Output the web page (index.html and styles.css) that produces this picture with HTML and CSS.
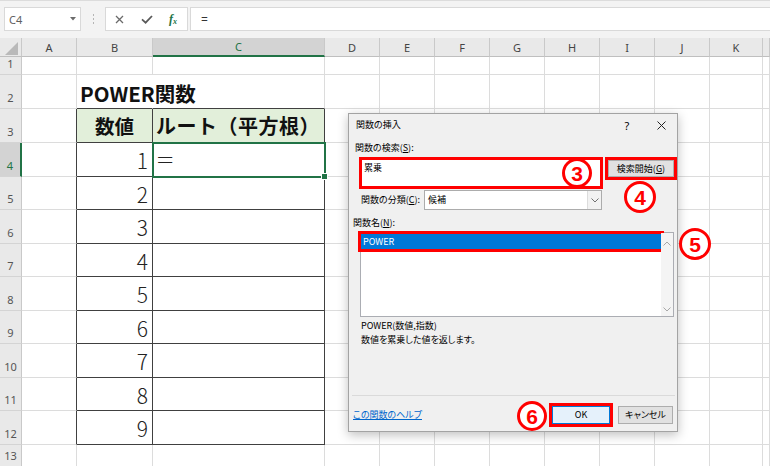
FILE: index.html
```html
<!DOCTYPE html>
<html lang="ja">
<head>
<meta charset="utf-8">
<title>POWER関数</title>
<link rel="stylesheet" href="styles.css">
</head>
<body>
<div class="app">
  <div class="fbar">
    <div class="namebox"><span>C4</span><svg width="6" height="4" viewBox="0 0 6 4"><path d="M0 0h6L3 3.5z" fill="#6b6b6b"/></svg></div>
    <div class="grip"><i></i><i></i><i></i></div>
    <div class="fbtns">
      <svg class="ic-x" width="9" height="9" viewBox="0 0 9 9"><path d="M1 1l7 7M8 1L1 8" stroke="#6a6a6a" stroke-width="1.3"/></svg>
      <svg class="ic-ok" width="12" height="9" viewBox="0 0 12 9"><path d="M1 4.3l3.6 3.4L11 1" fill="none" stroke="#5a5a5a" stroke-width="1.8"/></svg>
      <span class="fx">f<sub>x</sub></span>
    </div>
    <div class="finput">=</div>
  </div>

  <div class="sheet">
    <div class="r hd"><div class="corner"><svg width="13" height="13" viewBox="0 0 13 13"><path d="M13 0V13H0z" fill="#b9b9b9"/></svg></div><div>A</div><div>B</div><div class="on">C</div><div>D</div><div>E</div><div>F</div><div>G</div><div>H</div><div>I</div><div>J</div><div>K</div><div></div></div>
    <div class="r h1"><div class="rh">1</div><div></div><div></div><div></div><div></div><div></div><div></div><div></div><div></div><div></div><div></div><div></div><div></div></div>
    <div class="r h2"><div class="rh">2</div><div></div><div class="pw tb nr">POWER関数</div><div class="tb"></div><div></div><div></div><div></div><div></div><div></div><div></div><div></div><div></div><div></div></div>
    <div class="r h3"><div class="rh">3</div><div class="tl"></div><div class="t th">数値</div><div class="t th c3">ルート（平方根）</div><div></div><div></div><div></div><div></div><div></div><div></div><div></div><div></div><div></div></div>
    <div class="r hn"><div class="rh on">4</div><div class="tl"></div><div class="t num">1</div><div class="t sel"><span class="eq">=</span></div><div></div><div></div><div></div><div></div><div></div><div></div><div></div><div></div><div></div></div>
    <div class="r hn"><div class="rh">5</div><div class="tl"></div><div class="t num">2</div><div class="t"></div><div></div><div></div><div></div><div></div><div></div><div></div><div></div><div></div><div></div></div>
    <div class="r hn"><div class="rh">6</div><div class="tl"></div><div class="t num">3</div><div class="t"></div><div></div><div></div><div></div><div></div><div></div><div></div><div></div><div></div><div></div></div>
    <div class="r hn"><div class="rh">7</div><div class="tl"></div><div class="t num">4</div><div class="t"></div><div></div><div></div><div></div><div></div><div></div><div></div><div></div><div></div><div></div></div>
    <div class="r hn"><div class="rh">8</div><div class="tl"></div><div class="t num">5</div><div class="t"></div><div></div><div></div><div></div><div></div><div></div><div></div><div></div><div></div><div></div></div>
    <div class="r hn"><div class="rh">9</div><div class="tl"></div><div class="t num">6</div><div class="t"></div><div></div><div></div><div></div><div></div><div></div><div></div><div></div><div></div><div></div></div>
    <div class="r hn"><div class="rh">10</div><div class="tl"></div><div class="t num">7</div><div class="t"></div><div></div><div></div><div></div><div></div><div></div><div></div><div></div><div></div><div></div></div>
    <div class="r hn"><div class="rh">11</div><div class="tl"></div><div class="t num">8</div><div class="t"></div><div></div><div></div><div></div><div></div><div></div><div></div><div></div><div></div><div></div></div>
    <div class="r hn"><div class="rh">12</div><div class="tl"></div><div class="t num">9</div><div class="t"></div><div></div><div></div><div></div><div></div><div></div><div></div><div></div><div></div><div></div></div>
    <div class="r h13"><div class="rh">13</div><div></div><div></div><div></div><div></div><div></div><div></div><div></div><div></div><div></div><div></div><div></div><div></div></div>
  </div>

  <div class="dlg">
    <div class="dtitle"><span class="tt">関数の挿入</span><span class="q">?</span><span class="xb"><svg width="9" height="9" viewBox="0 0 9 9"><path d="M.5 .5l8 8M8.5 .5l-8 8" stroke="#222" stroke-width="1"/></svg></span></div>
    <div class="lbl l1">関数の検索(<u>S</u>):</div>
    <div class="srow">
      <div class="search">累乗</div>
      <div class="sbtn">検索開始(<u>G</u>)</div>
    </div>
    <div class="crow">
      <span class="clbl">関数の分類(<u>C</u>):</span>
      <div class="select"><span>候補</span><div class="arr"><svg width="8" height="5" viewBox="0 0 8 5"><path d="M.5 .5L4 4 7.5 .5" fill="none" stroke="#707070" stroke-width="1"/></svg></div></div>
    </div>
    <div class="lbl l2">関数名(<u>N</u>):</div>
    <div class="list">
      <div class="items"><div class="item">POWER</div></div>
      <div class="vscroll">
        <svg width="8" height="5" viewBox="0 0 8 5"><path d="M.5 4.5L4 1l3.5 3.5" fill="none" stroke="#a8a8a8" stroke-width="1"/></svg>
        <svg width="8" height="5" viewBox="0 0 8 5"><path d="M.5 .5L4 4 7.5 .5" fill="none" stroke="#a8a8a8" stroke-width="1"/></svg>
      </div>
    </div>
    <div class="desc">
      <div>POWER(数値,指数)</div>
      <div>数値を累乗した値を返します。</div>
    </div>
    <div class="sep"></div>
    <div class="foot">
      <a class="help">この関数のヘルプ</a>
      <div class="okwrap"><div class="ok">OK</div></div>
      <div class="cancel">キャンセル</div>
    </div>
    <div class="mark m3">3</div>
    <div class="mark m4">4</div>
    <div class="mark m5">5</div>
    <div class="mark m6">6</div>
  </div>
</div>
</body>
</html>
```

FILE: styles.css
```css
html, body {
  margin: 0;
  padding: 0;
}
body {
  width: 770px;
  height: 466px;
  overflow: hidden;
  background: #fff;
  font-family: "Noto Sans CJK JP", "Noto Sans", sans-serif;
}
.app {
  position: relative;
  width: 770px;
  height: 466px;
}

/* ---------- formula bar ---------- */
.fbar {
  height: 38px;
  box-sizing: border-box;
  background: #f3f3f3;
  border-top: 1px solid #dcdcdc;
  padding: 6px 0 7px 4px;
  display: flex;
}
.namebox {
  width: 77px;
  box-sizing: border-box;
  background: #fff;
  border: 1px solid #d9d9d9;
  display: flex;
  align-items: center;
  justify-content: space-between;
  padding: 0 4px 0 4px;
  font: 11px "Noto Sans", sans-serif;
  color: #606060;
}
.grip {
  width: 24px;
  display: flex;
  flex-direction: column;
  align-items: center;
  justify-content: center;
  gap: 2px;
}
.grip i {
  display: block;
  width: 1px;
  height: 2px;
  background: #b5b5b5;
}
.fbtns {
  width: 83px;
  box-sizing: border-box;
  background: #fff;
  border: 1px solid #d9d9d9;
  display: flex;
  align-items: center;
  padding-left: 9px;
}
.ic-ok {
  margin-left: 17px;
}
.fx {
  margin-left: 16px;
  font: italic bold 12px "Liberation Serif", serif;
  color: #217346;
}
.fx sub {
  font-size: 8px;
  vertical-align: -1px;
}
.finput {
  flex: 1;
  margin-left: 2px;
  background: #fff;
  border: 1px solid #d9d9d9;
  border-right: none;
  padding-left: 10px;
  display: flex;
  align-items: center;
  font: 12px "Noto Sans", sans-serif;
  color: #333;
}

/* ---------- sheet grid ---------- */
.r {
  display: grid;
  grid-template-columns: 22px 55px 76px 172px repeat(7, 55px) 53px 1fr;
}
.r > div {
  box-sizing: border-box;
  border-right: 1px solid #dcdcdc;
  border-bottom: 1px solid #dcdcdc;
  min-width: 0;
}
.hd { height: 19px; }
.h1 { height: 18px; }
.h2 { height: 34px; }
.h3 { height: 34px; }
.hn { height: 33.5px; }
.h13 { height: 22px; }

.hd > div {
  background: #e9e9e9;
  border-right-color: #c9c9c9;
  border-bottom-color: #bfbfbf;
  display: flex;
  align-items: center;
  justify-content: center;
  font: 11px "Noto Sans", sans-serif;
  color: #444;
}
.hd > div.on {
  background: #d3d3d3;
  color: #217346;
  border-bottom: 2px solid #217346;
}
.hd > div.corner {
  align-items: flex-end;
  justify-content: flex-end;
  padding: 0 3px 1px 0;
}
.r > .rh {
  background: #e9e9e9;
  border-right-color: #c9c9c9;
  border-bottom-color: #d4d4d4;
  display: flex;
  align-items: flex-end;
  justify-content: center;
  padding-bottom: 4px;
  font: 11px/13px "Noto Sans", sans-serif;
  color: #555;
}
.r > .rh.on {
  background: #d3d3d3;
  color: #217346;
  border-right: 2px solid #217346;
}

.r > .tl { border-right-color: #404040; }
.r > .tb { border-bottom-color: #404040; }
.r > .nr { border-right-color: transparent; }
.r > .t {
  border-right-color: #404040;
  border-bottom-color: #404040;
}
.pw {
  display: flex;
  align-items: center;
  padding: 2px 0 0 3px;
  white-space: nowrap;
  font-size: 20.5px;
  font-weight: 700;
  color: #111;
}
.r > .th {
  background: #e2efda;
  display: flex;
  align-items: center;
  justify-content: center;
  font-size: 19.5px;
  font-weight: 700;
  color: #111;
  white-space: nowrap;
}
.r > .th.c3 {
  justify-content: flex-start;
  padding-left: 3px;
  font-size: 20px;
  letter-spacing: 0.5px;
}
.num {
  display: flex;
  align-items: center;
  justify-content: flex-end;
  padding: 2px 4px 0 0;
  font-size: 21px;
  font-weight: 300;
  color: #222;
}
.sel {
  position: relative;
  outline: 2px solid #217346;
  outline-offset: -1px;
  display: flex;
  align-items: center;
  padding-left: 4px;
  font-size: 21px;
  font-weight: 300;
  color: #222;
}
.eq {
  display: inline-block;
  transform: scaleX(1.45);
  transform-origin: left center;
}
.sel::after {
  content: "";
  position: absolute;
  right: -4px;
  bottom: -4px;
  width: 5px;
  height: 5px;
  background: #217346;
  border: 1px solid #fff;
}

/* ---------- dialog ---------- */
.dlg {
  position: absolute;
  left: 348px;
  top: 113px;
  width: 330px;
  height: 319px;
  box-sizing: border-box;
  background: #f0f0f0;
  border: 1px solid #a3a3a3;
  box-shadow: 0 3px 10px rgba(0, 0, 0, 0.25);
  font-size: 9px;
  line-height: 14px;
  font-feature-settings: "palt";
  color: #000;
}
.dtitle {
  height: 22px;
  display: flex;
  align-items: center;
  padding: 0 10px 0 7px;
}
.tt { flex: 1; }
.q {
  width: 12px;
  margin-right: 22px;
  text-align: center;
  font: 11px "Noto Sans", sans-serif;
}
.xb {
  width: 12px;
  display: flex;
  justify-content: center;
}
.l1 {
  margin-top: 5px;
  padding-left: 6px;
}
.srow {
  display: flex;
  align-items: flex-start;
  gap: 2px;
  margin-top: 2px;
  padding-left: 10px;
}
.search {
  width: 244px;
  height: 32px;
  box-sizing: border-box;
  border: 3px solid #ff0000;
  background: #fff;
  padding: 1px 2px;
}
.sbtn {
  width: 72px;
  height: 23px;
  box-sizing: border-box;
  border: 3px solid #ff0000;
  background: #e1e1e1;
  box-shadow: inset 0 0 0 1px #adadad;
  display: flex;
  align-items: center;
  justify-content: center;
}
.crow {
  display: flex;
  align-items: center;
  height: 20px;
  margin-top: 1px;
  padding-left: 12px;
}
.clbl { width: 63px; }
.select {
  width: 178px;
  height: 20px;
  box-sizing: border-box;
  border: 1px solid #acacac;
  background: #fff;
  display: flex;
  align-items: center;
  padding-left: 3px;
}
.arr {
  margin-left: auto;
  width: 14px;
  height: 100%;
  box-sizing: border-box;
  border-left: 1px solid #dcdcdc;
  background: #f2f2f2;
  display: flex;
  align-items: center;
  justify-content: center;
}
.l2 {
  margin-top: 6px;
  padding-left: 4px;
}
.list {
  margin: 2px 0 0 11px;
  width: 314px;
  height: 85px;
  box-sizing: border-box;
  border: 1px solid #abadb3;
  background: #fff;
  display: flex;
}
.items {
  flex: 1;
  padding-top: 1px;
}
.item {
  height: 15px;
  line-height: 15px;
  padding-left: 2px;
  background: #0078d7;
  color: #fff;
  outline: 3px solid #ff0000;
}
.vscroll {
  width: 12px;
  background: #f4f4f4;
  display: flex;
  flex-direction: column;
  align-items: center;
  justify-content: space-between;
  padding: 8px 0 4px;
}
.desc {
  margin-top: 2px;
  padding-left: 12px;
}
.sep {
  margin: 48px 2px 0 3px;
  height: 1px;
  background: #dadada;
}
.foot {
  display: flex;
  align-items: center;
  height: 24px;
  margin-top: 7px;
  padding: 0 4px;
}
.help {
  flex: 1;
  color: #0066cc;
  text-decoration: underline;
}
.okwrap {
  width: 64px;
  height: 24px;
  box-sizing: border-box;
  border: 3px solid #ff0000;
  display: flex;
}
.ok {
  flex: 1;
  background: #e5f1fb;
  border: 1px solid #0078d7;
  display: flex;
  align-items: center;
  justify-content: center;
}
.cancel {
  margin-left: 5px;
  width: 55px;
  height: 18px;
  box-sizing: border-box;
  background: #e1e1e1;
  border: 1px solid #adadad;
  display: flex;
  align-items: center;
  justify-content: center;
}

/* annotation markers */
.mark {
  position: absolute;
  width: 30px;
  height: 30px;
  box-sizing: border-box;
  border: 3px solid #ff0000;
  border-radius: 50%;
  background: #fff;
  color: #ff0000;
  font: bold 21px/1 "Liberation Sans", sans-serif;
  display: flex;
  align-items: center;
  justify-content: center;
}
.m3 { left: 213px; top: 44px; }
.m4 { left: 275px; top: 67px; width: 32px; height: 32px; }
.m5 { left: 330px; top: 114px; width: 32px; height: 32px; }
.m6 { left: 168px; top: 287px; }
```
